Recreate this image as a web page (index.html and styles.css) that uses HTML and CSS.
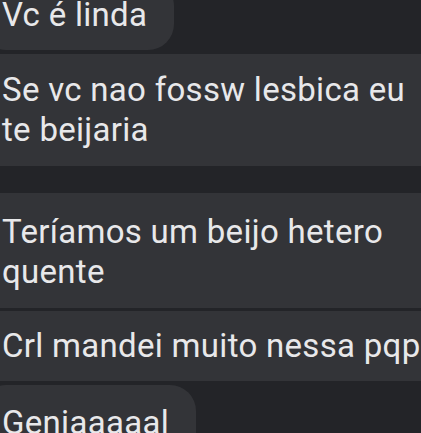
FILE: index.html
```html
<!DOCTYPE html>
<html lang="pt">
<head>
<meta charset="utf-8">
<title>Mensagens</title>
<link rel="stylesheet" href="styles.css">
</head>
<body>
<div class="thread">
  <div class="bubble b1 round-br">Vc é linda</div>
  <div class="bubble b2 wide">Se vc nao fossw lesbica eu<br>te beijaria</div>
  <div class="bubble b3 wide">Teríamos um beijo hetero<br>quente</div>
  <div class="bubble b4 wide">Crl mandei muito nessa pqp</div>
  <div class="bubble b5 round-tr">Geniaaaaal</div>
</div>
</body>
</html>
```

FILE: styles.css
```css
html, body {
  margin: 0;
  padding: 0;
  background: #232428;
  overflow: hidden;
  height: 433px;
}

.thread {
  display: flex;
  flex-direction: column;
  align-items: flex-start;
  margin-top: -20px;
  font-family: Roboto, "Noto Sans", sans-serif;
  font-size: 33px;
  line-height: 40px;
  letter-spacing: 0.3px;
  color: #e8e8ea;
}

.bubble {
  background: #333438;
  margin-left: -20px;
  padding: 15px 27px 15px 22px;
  white-space: nowrap;
  border-radius: 26px;
}

.wide {
  width: 440px;
  border-radius: 0;
}

.b1 { margin-bottom: 4px; }
.b2 { padding-top: 16px; padding-bottom: 16px; margin-bottom: 27px; }
.b3 { padding-top: 19px; padding-bottom: 16px; margin-bottom: 3px; }
.b4 { margin-bottom: 4px; }
.b5 { padding-top: 18px; }
```
